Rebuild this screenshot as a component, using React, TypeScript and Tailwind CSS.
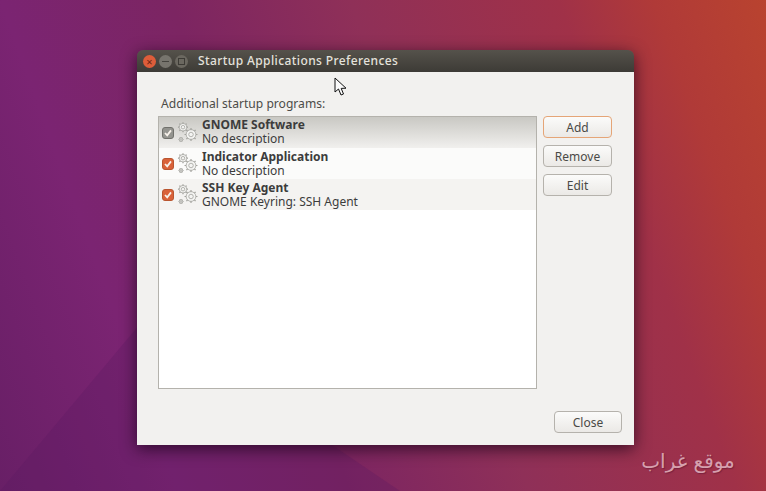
const font = { fontFamily: '"Noto Sans", "Open Sans", sans-serif' };

const programs = [
  { name: "GNOME Software", desc: "No description", selected: true },
  { name: "Indicator Application", desc: "No description" },
  { name: "SSH Key Agent", desc: "GNOME Keyring: SSH Agent", alt: true },
];

function Gear({ x, y, r }: { x: number; y: number; r: number }) {
  const teeth = Array.from({ length: 8 }, (_, i) => (i * Math.PI) / 4);
  return (
    <g stroke="#a3a39e" fill="#f4f4f2">
      {teeth.map((t) => (
        <line
          key={t}
          x1={x + Math.cos(t) * r * 0.85}
          y1={y + Math.sin(t) * r * 0.85}
          x2={x + Math.cos(t) * r * 1.2}
          y2={y + Math.sin(t) * r * 1.2}
          strokeWidth="1.2"
        />
      ))}
      <circle cx={x} cy={y} r={r * 0.9} strokeWidth="0.8" />
      <circle cx={x} cy={y} r={r * 0.42} strokeWidth="0.8" />
    </g>
  );
}

function GearsIcon() {
  return (
    <svg width="23" height="22" viewBox="0 0 23 22" className="shrink-0">
      <Gear x={6} y={5.2} r={4.2} />
      <Gear x={14} y={12.5} r={5.4} />
      <Gear x={4} y={17.5} r={2} />
    </svg>
  );
}

function Check({ selected }: { selected?: boolean }) {
  return (
    <span
      className={`flex h-[12px] w-[12px] shrink-0 items-center justify-center rounded-[3px] border ${
        selected ? "border-[#71716c] bg-[#94948f]" : "border-[#b9552f] bg-[#d9623a]"
      }`}
    >
      <svg width="8" height="8" viewBox="0 0 8 8">
        <path d="M1 4 L3.2 6.4 L7 1.4" fill="none" stroke="#f7f1ea" strokeWidth="1.8" />
      </svg>
    </span>
  );
}

function Button({ label, focused, className = "" }: { label: string; focused?: boolean; className?: string }) {
  return (
    <button
      className={`h-[22px] rounded-[4px] border bg-gradient-to-b from-[#fbfbfa] to-[#ebe9e6] pt-[2px] text-[12px] leading-none text-[#4a4a46] ${
        focused ? "border-[#e5a577]" : "border-[#b5b2ac]"
      } ${className}`}
    >
      {label}
    </button>
  );
}

function Row({ name, desc, selected, alt }: { name: string; desc: string; selected?: boolean; alt?: boolean }) {
  return (
    <div
      className={`flex h-[31px] items-center pl-[3px] ${
        selected
          ? "bg-gradient-to-b from-[#c9c8c3] to-[#f1f0ee]"
          : alt
            ? "bg-[#f4f3f1]"
            : "bg-[#fbfbfa]"
      }`}
    >
      <Check selected={selected} />
      <span className="ml-[3px]">
        <GearsIcon />
      </span>
      <div
        className={`ml-[2px] flex flex-col text-[12px] leading-[14px] text-[#3c3c3c] ${
          selected ? "mb-[2px]" : ""
        }`}
      >
        <span className="font-bold">{name}</span>
        <span>{desc}</span>
      </div>
    </div>
  );
}

export default function App() {
  return (
    <div
      style={font}
      className="relative h-[491px] w-[766px] overflow-hidden bg-[linear-gradient(70deg,#681f66_0%,#7b2472_19%,#7c2562_37%,#8f3058_56%,#a03148_78%,#b03a38_88%,#b9432f_100%)] pl-[137px] pt-[50px]"
    >
      {/* wallpaper facet */}
      <svg className="absolute inset-0" width="766" height="491" viewBox="0 0 766 491">
        <polygon points="145,318 400,491 0,491" fill="#5a1a60" opacity="0.28" />
      </svg>

      {/* window */}
      <div className="relative flex h-[395px] w-[497px] flex-col overflow-hidden rounded-t-[6px] shadow-[0_4px_16px_rgba(20,0,20,0.7)]">
        <div className="flex h-[22px] shrink-0 items-center bg-gradient-to-b from-[#55524b] to-[#3d3b36] pl-[6px]">
          <span className="flex h-[13px] w-[13px] items-center justify-center rounded-full bg-[#dd5d3a] text-[11px] leading-none text-[#6b2412]">
            ×
          </span>
          <span className="ml-[3px] flex h-[13px] w-[13px] items-center justify-center rounded-full bg-[#77746d]">
            <span className="h-px w-[7px] bg-[#45433e]" />
          </span>
          <span className="ml-[3px] flex h-[13px] w-[13px] items-center justify-center rounded-full bg-[#6b6860]">
            <span className="h-[7px] w-[7px] border border-[#3d3b36]" />
          </span>
          <span className="ml-[10px] text-[12px] font-medium tracking-[0.4px] text-[#e4e2dc]">
            Startup Applications Preferences
          </span>
        </div>

        <div className="flex flex-1 flex-col bg-[#f2f1ef] pb-[12px] pl-[21px] pr-[12px] pt-[24px]">
          <div className="h-[20px] pl-[3px] text-[12.1px] leading-[15px] text-[#4c4c48]">
            Additional startup programs:
          </div>
          <div className="flex flex-1 gap-[6px]">
            <div className="mb-[20px] h-[273px] w-[379px] border border-[#b4b2ac] bg-white">
              {programs.map((p) => (
                <Row key={p.name} {...p} />
              ))}
            </div>
            <div className="flex w-[69px] flex-col gap-[7px]">
              <Button label="Add" focused />
              <Button label="Remove" />
              <Button label="Edit" />
            </div>
          </div>
          <div className="flex justify-end">
            <Button label="Close" className="w-[68px]" />
          </div>
        </div>
      </div>

      {/* cursor */}
      <svg className="absolute left-[334px] top-[77px]" width="14" height="20" viewBox="0 0 14 20">
        <path
          d="M1 1 L1 15 L4.5 12 L7 18 L9.5 17 L7.2 11.4 L12 11.2 Z"
          fill="#fafafa"
          stroke="#111"
          strokeWidth="1"
        />
      </svg>

      {/* watermark */}
      <div
        dir="rtl"
        className="absolute left-[640px] top-[447px] w-[96px] text-center text-[20px] leading-[28px] text-[#d6a0ae] [text-shadow:1px_1px_1px_rgba(90,20,50,0.5)]"
        style={{ fontFamily: '"DejaVu Sans", sans-serif' }}
      >
        موقع غراب
      </div>
    </div>
  );
}
